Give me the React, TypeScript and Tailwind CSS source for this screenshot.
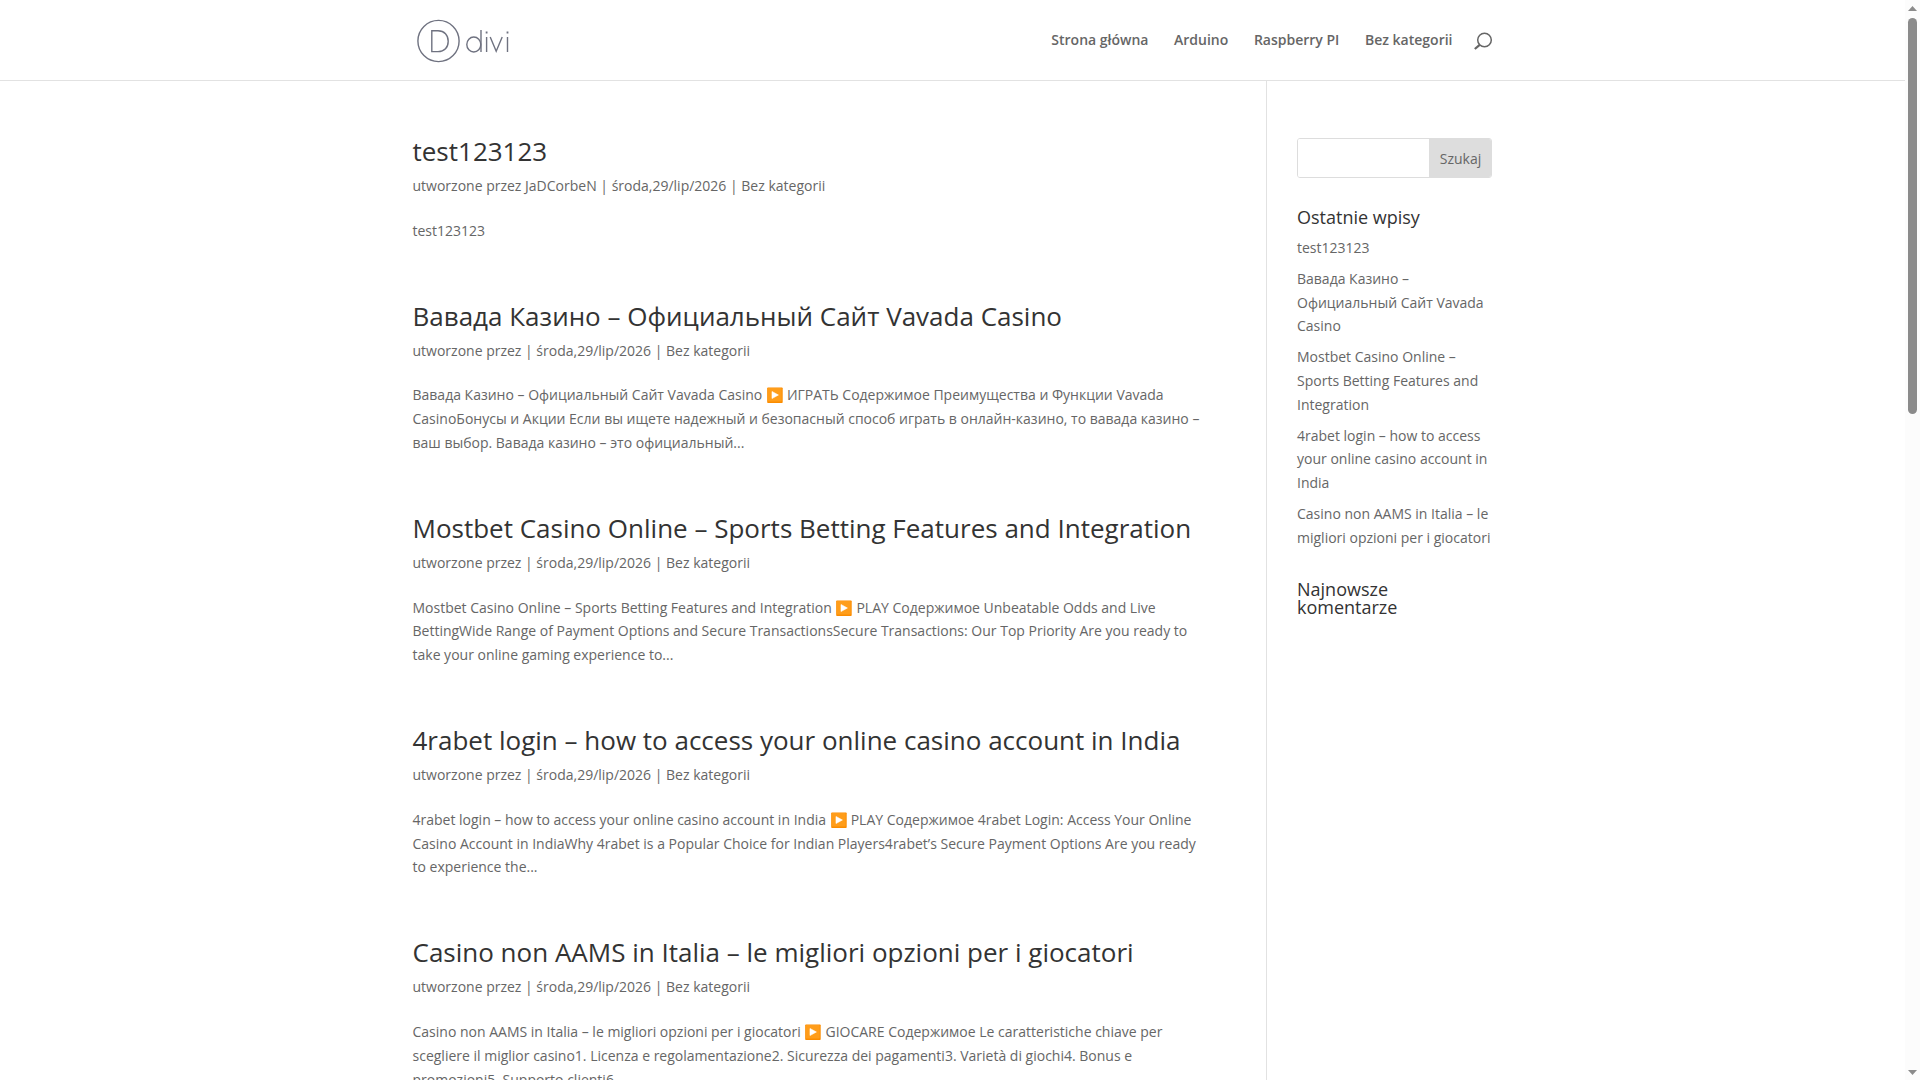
type Post = { title: string; author?: string; intro: string; rest?: string };

const posts: Post[] = [
  { title: 'test123123', author: 'JaDCorbeN', intro: 'test123123' },
  {
    title: 'Вавада Казино – Официальный Сайт Vavada Casino',
    intro: 'Вавада Казино – Официальный Сайт Vavada Casino ',
    rest: ' ИГРАТЬ Содержимое Преимущества и Функции Vavada CasinoБонусы и Акции Если вы ищете надежный и безопасный способ играть в онлайн-казино, то вавада казино – ваш выбор. Вавада казино – это официальный...',
  },
  {
    title: 'Mostbet Casino Online – Sports Betting Features and Integration',
    intro: 'Mostbet Casino Online – Sports Betting Features and Integration ',
    rest: ' PLAY Содержимое Unbeatable Odds and Live BettingWide Range of Payment Options and Secure TransactionsSecure Transactions: Our Top Priority Are you ready to take your online gaming experience to...',
  },
  {
    title: '4rabet login – how to access your online casino account in India',
    intro: '4rabet login – how to access your online casino account in India ',
    rest: ' PLAY Содержимое 4rabet Login: Access Your Online Casino Account in IndiaWhy 4rabet is a Popular Choice for Indian Players4rabet’s Secure Payment Options Are you ready to experience the...',
  },
  {
    title: 'Casino non AAMS in Italia – le migliori opzioni per i giocatori',
    intro: 'Casino non AAMS in Italia – le migliori opzioni per i giocatori ',
    rest: ' GIOCARE Содержимое Le caratteristiche chiave per scegliere il miglior casino1. Licenza e regolamentazione2. Sicurezza dei pagamenti3. Varietà di giochi4. Bonus e promozioni5. Supporto clienti6....',
  },
];

function Play() {
  return (
    <svg className="inline-block h-[17px] w-[17.4px] align-[-4px]" viewBox="0 0 17 17">
      <rect x="1" y="0.5" width="15.5" height="15.5" rx="0.8" fill="#fb8c00" />
      <rect x="1.5" y="1" width="14" height="13.5" rx="0.8" fill="#ff9d1a" />
      <path d="M5.8 4.500L12.200 8L5.800 11.500Z" fill="#fff" stroke="#fff" strokeWidth="0.6" strokeLinejoin="round" />
    </svg>
  );
}

function Logo() {
  return (
    <svg className="mt-[1px]" width="102" height="44" viewBox="0 0 102 44" fill="none" stroke="#6f7280" strokeWidth="1.4">
      <circle cx="25.500" cy="22" r="20.6" />
      <path d="M18.800 11.8v20.8h6.2c6.400 0 10.200-4.200 10.200-10.400s-3.800-10.400-10.200-10.400z" />
      <ellipse cx="60.800" cy="25.500" rx="7" ry="7.500" />
      <path d="M68 11v22M73.600 18v15M77.200 18l6 14.200 6-14.200M94.500 18v15" />
      <path d="M73.600 12.500v2M94.500 12.500v2" strokeWidth="1.8" />
    </svg>
  );
}

export default function App() {
  return (
    <div className="flex h-[1080px] w-[1920px] overflow-hidden bg-white font-['Open_Sans',sans-serif] text-[14px] leading-[23.8px] font-medium text-[#666]">
      <div className="flex w-[1905px] flex-col">
        <header className="flex h-[81px] shrink-0 justify-center border-b border-[#e2e2e2]">
          <div className="flex w-[1080px] items-center justify-between">
            <Logo />
            <nav className="flex items-center font-semibold">
              <div className="flex gap-[25.6px]">
                <a>Strona główna</a>
                <a>Arduino</a>
                <a>Raspberry PI</a>
                <a>Bez kategorii</a>
              </div>
              <svg className="mt-[4px] ml-[21px]" width="19" height="19" viewBox="0 0 19 19" fill="none" stroke="#666" strokeWidth="1.5">
                <circle cx="10.500" cy="8" r="6.800" />
                <path d="M5.700 12.800L0.800 17" strokeWidth="2.200" />
              </svg>
            </nav>
          </div>
        </header>
        <div className="flex min-h-0 flex-1 pl-[412.5px]">
          <main className="w-[854.5px] shrink-0 border-r border-[#e2e2e2] pt-[57px] pr-[64px]">
            {posts.map((p) => (
              <article key={p.title} className="mb-[60px]">
                <h2 className="pb-[10px] text-[26px] leading-[26px] text-[#333]">{p.title}</h2>
                <p className="mb-[21px]">
                  {p.author ? `utworzone przez ${p.author} | środa,29/lip/2026 | Bez kategorii` : 'utworzone przez | środa,29/lip/2026 | Bez kategorii'}
                </p>
                <p>
                  {p.intro}
                  {p.rest && <Play />}
                  {p.rest}
                </p>
              </article>
            ))}
          </main>
          <aside className="ml-[30px] w-[195px] pt-[57px]">
            <div className="flex h-[40px] overflow-hidden rounded-[3px] border border-[#ddd]">
              <input className="min-w-0 flex-1 bg-white" />
              <button className="w-[62px] bg-[#ddd] pt-[2px] pl-[1px] text-[14px]">Szukaj</button>
            </div>
            <h4 className="mt-[30px] pb-[10px] text-[18px] leading-[18px] text-[#333]">Ostatnie wpisy</h4>
            <ul className="flex flex-col gap-[7px]">
              {posts.map((p) => (
                <li key={p.title}>{p.title}</li>
              ))}
            </ul>
            <h4 className="mt-[30px] text-[18px] leading-[18px] text-[#333]">
              Najnowsze
              <br />
              komentarze
            </h4>
          </aside>
        </div>
      </div>
      <div className="flex w-[15px] flex-col items-center justify-between bg-[#fcfcfc] pt-[6px] pb-[5px]">
        <div className="flex flex-col items-center gap-[7px]">
          <svg width="9" height="5" viewBox="0 0 9 5"><path d="M0 5L4.500 0L9 5Z" fill="#8b8b8b" /></svg>
          <div className="h-[396px] w-[9px] rounded-full bg-[#8b8b8b]" />
        </div>
        <svg width="9" height="5" viewBox="0 0 9 5"><path d="M0 0L4.500 5L9 0Z" fill="#8b8b8b" /></svg>
      </div>
    </div>
  );
}
